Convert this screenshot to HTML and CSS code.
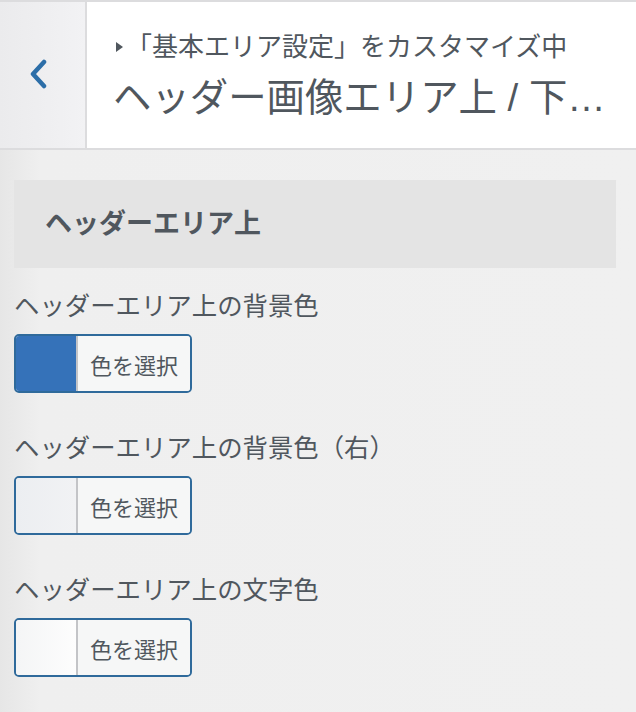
FILE: index.html
```html
<!DOCTYPE html>
<html lang="ja">
<head>
<meta charset="utf-8">
<link rel="stylesheet" href="styles.css">
</head>
<body>
<div class="header">
  <div class="back">
    <svg width="18" height="30" viewBox="0 0 18 30"><path d="M15 3 L4 15 L15 27" fill="none" stroke="#2c6ea8" stroke-width="4.5" stroke-linecap="round" stroke-linejoin="round"/></svg>
  </div>
  <div class="titles">
    <div class="action"><svg class="tri" width="8" height="10" viewBox="0 0 8 10"><path d="M0 0 L7 5 L0 10 Z" fill="#50575e"/></svg>「基本エリア設定」をカスタマイズ中</div>
    <div class="title">ヘッダー画像エリア上 / 下…</div>
  </div>
</div>
<div class="content">
  <div class="section-title">ヘッダーエリア上</div>
  <div class="control">
    <div class="label">ヘッダーエリア上の背景色</div>
    <div class="picker"><span class="swatch swatch-blue"></span><span class="pick-text">色を選択</span></div>
  </div>
  <div class="control">
    <div class="label">ヘッダーエリア上の背景色（右）</div>
    <div class="picker"><span class="swatch swatch-light"></span><span class="pick-text">色を選択</span></div>
  </div>
  <div class="control">
    <div class="label">ヘッダーエリア上の文字色</div>
    <div class="picker"><span class="swatch swatch-white"></span><span class="pick-text">色を選択</span></div>
  </div>
</div>
</body>
</html>
```
FILE: styles.css
```css
html, body {
  margin: 0;
  padding: 0;
}
body {
  width: 636px;
  height: 712px;
  overflow: hidden;
  background: linear-gradient(to right, #e6e6e6 0px, #efefef 40px, #f0f0f0 100%);
  font-family: "Liberation Sans", "Noto Sans CJK JP", sans-serif;
  color: #50575e;
}
.header {
  display: flex;
  height: 146px;
  border-top: 2px solid #dcdcde;
  border-bottom: 2px solid #dcdcde;
  background: #fff;
}
.back {
  width: 85px;
  flex: none;
  border-right: 2px solid #dcdcde;
  background: linear-gradient(to right, #ebebed, #f2f2f4);
  display: flex;
  align-items: center;
  justify-content: center;
}
.back svg {
  margin-left: -10px;
  margin-top: -2px;
}
.titles {
  flex: 1;
  min-width: 0;
  padding: 28px 20px 0 26px;
}
.action {
  font-size: 26px;
  line-height: 34px;
  display: flex;
  align-items: center;
  white-space: nowrap;
  margin-left: 3px;
}
.tri {
  margin-right: 2px;
}
.title {
  font-size: 38.4px;
  line-height: 52px;
  margin-top: 8px;
  white-space: nowrap;
}
.content {
  padding: 30px 20px 0 14px;
}
.section-title {
  height: 88px;
  background: #e4e4e4;
  font-size: 27px;
  font-weight: bold;
  line-height: 88px;
  padding-left: 31px;
  margin-bottom: 21px;
}
.control {
  margin-bottom: 38px;
}
.label {
  font-size: 25.4px;
  line-height: 34px;
  margin-bottom: 11px;
  white-space: nowrap;
}
.picker {
  display: flex;
  width: 174px;
  height: 55px;
  border: 2px solid #2f6a9b;
  border-radius: 5px;
  overflow: hidden;
}
.swatch {
  width: 60px;
  flex: none;
}
.swatch-blue {
  background: #3572b9;
}
.swatch-light {
  background: linear-gradient(to right, #eceef1, #f1f2f4);
}
.swatch-white {
  background: linear-gradient(to right, #f4f5f6, #fdfdfd);
}
.pick-text {
  flex: 1;
  border-left: 2px solid #c3c4c7;
  background: #f6f7f7;
  font-size: 22px;
  display: flex;
  align-items: center;
  justify-content: center;
  color: #50575e;
}
```
